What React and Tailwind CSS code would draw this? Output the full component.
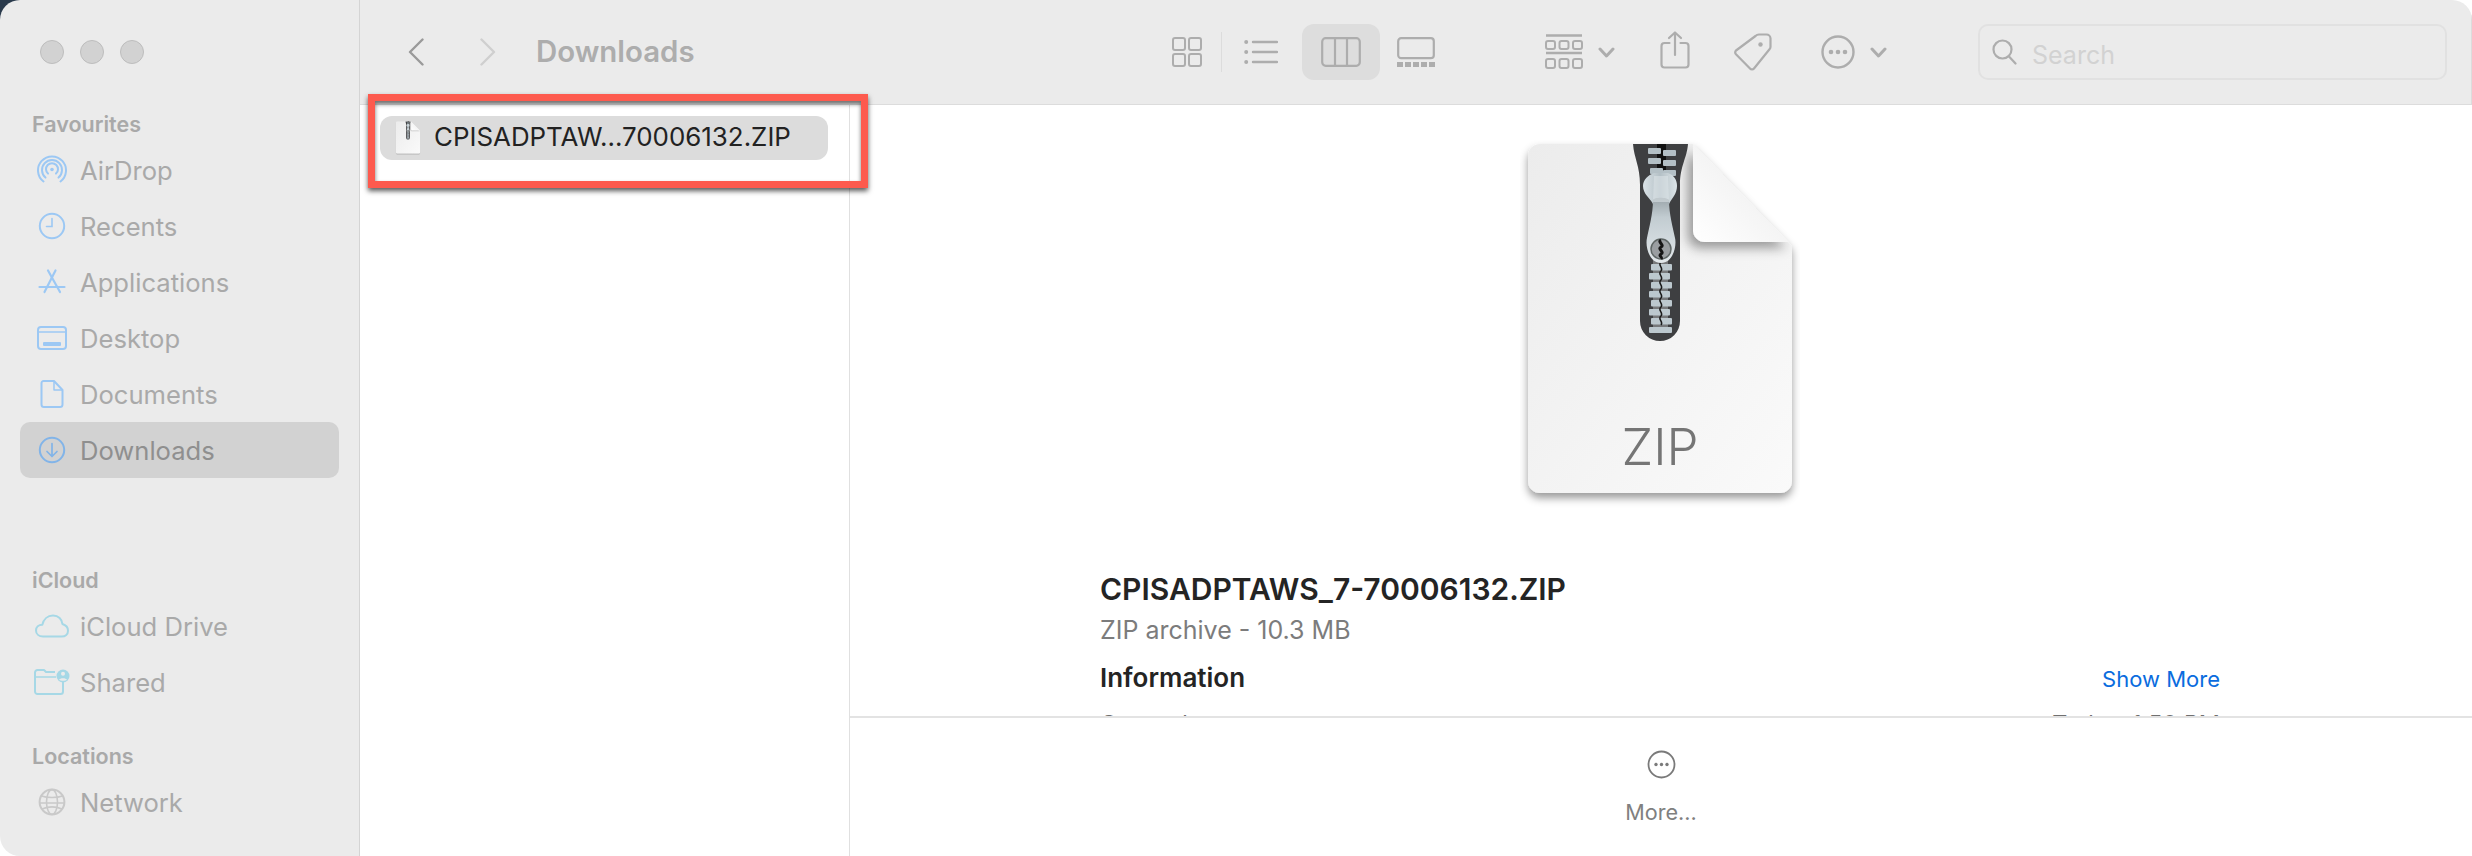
import React from "react";

const S = ({ w, h, vb, className = "", children, ...p }) => (
  <svg width={w} height={h} viewBox={vb || `0 0 ${w} ${h}`} fill="none" className={`shrink-0 ${className}`} {...p}>
    {children}
  </svg>
);

const blue = "#9cc8f4";
const teal = "#a6d8e6";

const AirDrop = () => (
  <S w={30} h={30} stroke={blue} strokeWidth="2" strokeLinecap="round">
    <path d="M6.5 26.5A14 14 0 1 1 23.5 26.5" />
    <path d="M8.5 22.6A10 10 0 1 1 21.5 22.6" />
    <path d="M11 18.6A6 6 0 1 1 19 18.6" />
    <circle cx="15" cy="14.5" r="1.8" fill={blue} stroke="none" />
  </S>
);
const Recents = () => (
  <S w={28} h={28} stroke={blue} strokeWidth="2" strokeLinecap="round">
    <circle cx="14" cy="14" r="12.2" />
    <path d="M14 6.5V14.5H8.5" strokeWidth="1.6" />
  </S>
);
const Apps = () => (
  <S w={28} h={28} stroke={blue} strokeWidth="2.2" strokeLinecap="round">
    <path d="M10 2.5L22 24" />
    <path d="M17.5 2.5L6.5 24" />
    <path d="M1.5 19H26.5" />
  </S>
);
const Desktop = () => (
  <S w={30} h={24} stroke={blue} strokeWidth="2">
    <rect x="1" y="1" width="28" height="22" rx="3" />
    <path d="M1 6H29" strokeWidth="1.5" />
    <rect x="6" y="16" width="18" height="4" rx="1" fill={blue} stroke="none" />
  </S>
);
const Documents = () => (
  <S w={24} h={28} stroke={blue} strokeWidth="2" strokeLinejoin="round">
    <path d="M3.5 1H14L22.5 10V24.5A2.5 2.5 0 0 1 20 27H4A2.5 2.5 0 0 1 1.5 24.5V3A2 2 0 0 1 3.5 1Z" />
    <path d="M14 1V10H22.5" strokeWidth="1.5" />
  </S>
);
const DownloadsI = () => (
  <S w={28} h={28} stroke="#82b4e8" strokeWidth="2" strokeLinecap="round" strokeLinejoin="round">
    <circle cx="14" cy="14" r="12.2" />
    <path d="M14 7.5V20M9 15.5L14 20.5L19 15.5" strokeWidth="1.7" />
  </S>
);
const Cloud = () => (
  <S w={34} h={24} stroke={teal} strokeWidth="2" strokeLinejoin="round">
    <path d="M8 22.5C4 22.5 1 20 1 16.5C1 13 3.7 10.7 7.3 10.7C8.5 5.5 12.5 1.5 18 1.5C23.5 1.5 27 5.3 27.4 10C30.7 11 33 13.5 33 16.7C33 20.2 30.4 22.5 26.7 22.5Z" />
  </S>
);
const Shared = () => (
  <S w={36} h={26} stroke={teal} strokeWidth="2" strokeLinejoin="round">
    <path d="M21 3H12L10 1H3.5A2.5 2.5 0 0 0 1 3.5V22.5A2.5 2.5 0 0 0 3.5 25H26.5A2.5 2.5 0 0 0 29 22.5V13" />
    <path d="M1 8H22" strokeWidth="1.5" />
    <circle cx="29" cy="7" r="6.5" fill={teal} stroke="none" />
    <circle cx="29" cy="4.8" r="2" fill="#ebebeb" stroke="none" />
    <path d="M25 10.8C25.8 8.6 32.2 8.6 33 10.8C31 12.2 27 12.2 25 10.8Z" fill="#ebebeb" stroke="none" />
  </S>
);
const Globe = () => (
  <S w={28} h={28} stroke="#c9c9c9" strokeWidth="1.6">
    <circle cx="14" cy="14" r="12.4" strokeWidth="2" />
    <ellipse cx="14" cy="14" rx="5.5" ry="12.4" />
    <path d="M3.5 8C9 10 19 10 24.5 8M2 15H26M4 21C10 18.5 18 18.5 24 21" />
  </S>
);

const Item = ({ icon, label, active }) => (
  <div className={`mx-5 h-14 flex items-center rounded-[10px] pl-4 ${active ? "bg-[#d2d2d2] text-[#8f8f8f]" : "text-[#a9a9a9]"}`}>
    <span className="w-8 flex items-center justify-center shrink-0">{icon}</span>
    <span className="ml-3 mt-px text-[25.6px] leading-8">{label}</span>
  </div>
);
const Label = ({ children, className = "" }) => (
  <div className={`h-7 pl-8 text-[21.5px] leading-7 font-semibold text-[#a9a9a9] ${className}`}>{children}</div>
);

const Sidebar = () => (
  <aside className="w-[360px] shrink-0 h-full bg-[#ebebeb] border-r border-[#d4d4d4] flex flex-col">
    <div className="flex gap-4 pl-10 pt-10">
      {[0, 1, 2].map((i) => (
        <div key={i} className="w-6 h-6 rounded-full bg-[#d2d2d2] border border-[#bdbdbd]" />
      ))}
    </div>
    <Label className="mt-[46px] mb-1">Favourites</Label>
    <Item icon={<AirDrop />} label="AirDrop" />
    <Item icon={<Recents />} label="Recents" />
    <Item icon={<Apps />} label="Applications" />
    <Item icon={<Desktop />} label="Desktop" />
    <Item icon={<Documents />} label="Documents" />
    <Item icon={<DownloadsI />} label="Downloads" active />
    <Label className="mt-[88px] mb-1">iCloud</Label>
    <Item icon={<Cloud />} label="iCloud Drive" />
    <Item icon={<Shared />} label="Shared" />
    <Label className="mt-8 mb-1">Locations</Label>
    <Item icon={<Globe />} label="Network" />
  </aside>
);

const tb = "#adadad";
const Chev = ({ className }) => (
  <S w={17} h={11} className={className} stroke={tb} strokeWidth="3" strokeLinecap="round" strokeLinejoin="round">
    <path d="M2 2L8.5 9L15 2" />
  </S>
);

const Toolbar = () => (
  <div className="h-[105px] shrink-0 bg-[#ebebeb] border-b border-r border-[#dcdcdc] flex items-center">
    <S w={16} h={28} className="ml-12" stroke="#9a9a9a" strokeWidth="2.4" strokeLinecap="round" strokeLinejoin="round">
      <path d="M14.5 1.5L2 14L14.5 26.5" />
    </S>
    <S w={16} h={28} className="ml-14" stroke="#cfcfcf" strokeWidth="2.4" strokeLinecap="round" strokeLinejoin="round">
      <path d="M1.5 1.5L14 14L1.5 26.5" />
    </S>
    <div className="ml-10 w-[636px] text-[29.4px] leading-9 font-semibold text-[#adadad]">Downloads</div>
    <S w={30} h={30} stroke={tb} strokeWidth="2">
      <rect x="1" y="1" width="12" height="12" rx="2" />
      <rect x="17" y="1" width="12" height="12" rx="2" />
      <rect x="1" y="17" width="12" height="12" rx="2" />
      <rect x="17" y="17" width="12" height="12" rx="2" />
    </S>
    <div className="ml-[19px] w-px h-10 bg-[#dcdcdc]" />
    <S w={34} h={26} className="ml-[22px]" stroke={tb} strokeWidth="2.4" strokeLinecap="round">
      <circle cx="2.2" cy="3" r="2" fill={tb} stroke="none" />
      <circle cx="2.2" cy="13" r="2" fill={tb} stroke="none" />
      <circle cx="2.2" cy="23" r="2" fill={tb} stroke="none" />
      <path d="M9 3H33M9 13H33M9 23H33" />
    </S>
    <div className="ml-6 w-[78px] h-14 rounded-[12px] bg-[#dddddd] flex items-center justify-center">
      <S w={40} h={30} stroke={tb} strokeWidth="2.2">
        <rect x="1.2" y="1.2" width="37.6" height="27.6" rx="3.5" />
        <path d="M14 1.2V28.8M26 1.2V28.8" />
      </S>
    </div>
    <S w={38} h={30} className="ml-[17px]" stroke={tb} strokeWidth="2.2">
      <rect x="1.2" y="1.2" width="35.6" height="20" rx="3" />
      <g fill={tb} stroke="none">
        <rect x="0" y="25" width="6" height="5" />
        <rect x="8" y="25" width="6" height="5" />
        <rect x="16" y="25" width="6" height="5" />
        <rect x="24" y="25" width="6" height="5" />
        <rect x="32" y="25" width="6" height="5" />
      </g>
    </S>
    <S w={38} h={36} className="ml-[110px]" stroke={tb} strokeWidth="2">
      <path d="M1 1.5H37M1 19H37" strokeWidth="2.6" />
      <rect x="1" y="7" width="9" height="8" rx="2" />
      <rect x="14.5" y="7" width="9" height="8" rx="2" />
      <rect x="28" y="7" width="9" height="8" rx="2" />
      <rect x="1" y="25" width="9" height="9" rx="2" />
      <rect x="14.5" y="25" width="9" height="9" rx="2" />
      <rect x="28" y="25" width="9" height="9" rx="2" />
    </S>
    <Chev className="ml-[15px]" />
    <S w={30} h={38} className="ml-[45px] -mt-1" stroke={tb} strokeWidth="2.2" strokeLinecap="round" strokeLinejoin="round">
      <path d="M15 24V1.5M9 7L15 1.5L21 7" />
      <path d="M9.5 12H4.5A3 3 0 0 0 1.5 15V33.5A3 3 0 0 0 4.5 36.5H25.5A3 3 0 0 0 28.5 33.5V15A3 3 0 0 0 25.5 12H20.5" />
    </S>
    <S w={38} h={38} className="ml-[44px]" stroke={tb} strokeWidth="2.2" strokeLinejoin="round">
      <path d="M25 1.5H32.5A4 4 0 0 1 36.5 5.5V13.5A4 4 0 0 1 35.5 16.3L20 35.5A2.6 2.6 0 0 1 16 35.5L2.2 21.5A3 3 0 0 1 2 17.5L21.5 3A5 5 0 0 1 25 1.5Z" />
      <circle cx="26.5" cy="11.5" r="2.2" fill={tb} stroke="none" />
    </S>
    <S w={34} h={34} className="ml-[49px]" stroke={tb} strokeWidth="2.4">
      <circle cx="17" cy="17" r="15.5" />
      <g fill={tb} stroke="none">
        <circle cx="10" cy="17" r="2.3" />
        <circle cx="17" cy="17" r="2.3" />
        <circle cx="24" cy="17" r="2.3" />
      </g>
    </S>
    <Chev className="ml-[15px]" />
    <div className="ml-[91px] w-[469px] h-14 rounded-[10px] border-2 border-[#e1e1e1] flex items-center pl-[12px]">
      <S w={25} h={26} stroke={tb} strokeWidth="2.2" strokeLinecap="round">
        <circle cx="10.5" cy="10.5" r="9" />
        <path d="M17 17.5L23.5 24.5" />
      </S>
      <span className="ml-[15px] mt-[5px] text-[25px] leading-8 text-[#d2d2d2]">Search</span>
    </div>
  </div>
);

const ZipPage = ({ w, h, prefix }) => (
  <S w={w} h={h} vb="0 0 280 370">
    <defs>
      <linearGradient id={`${prefix}page`} x1="0" y1="0" x2="1" y2="1">
        <stop offset="0" stopColor="#ececec" />
        <stop offset="1" stopColor="#fafafa" />
      </linearGradient>
      <linearGradient id={`${prefix}fold`} x1="0" y1="1" x2="1" y2="0">
        <stop offset="0" stopColor="#ffffff" />
        <stop offset="0.6" stopColor="#f2f2f2" />
        <stop offset="1" stopColor="#e2e2e2" />
      </linearGradient>
      <linearGradient id={`${prefix}metal`} x1="0" y1="0" x2="1" y2="0">
        <stop offset="0" stopColor="#dbe3e7" />
        <stop offset="0.5" stopColor="#b4c0c6" />
        <stop offset="1" stopColor="#dde5e8" />
      </linearGradient>
      <linearGradient id={`${prefix}pull`} x1="0" y1="0" x2="0" y2="1">
        <stop offset="0" stopColor="#9aa4a9" />
        <stop offset="0.3" stopColor="#c2ccd1" />
        <stop offset="1" stopColor="#e2e8eb" />
      </linearGradient>
      <filter id={`${prefix}shadow`} x="-10%" y="-10%" width="120%" height="120%">
        <feDropShadow dx="0" dy="5" stdDeviation="4" floodColor="#000" floodOpacity="0.4" />
      </filter>
      <filter id={`${prefix}foldShadow`} x="-40%" y="-40%" width="180%" height="180%">
        <feDropShadow dx="-5" dy="6" stdDeviation="6" floodColor="#000" floodOpacity="0.38" />
      </filter>
      <clipPath id={`${prefix}clip`}>
        <path d="M20 4H173L272 106V341A12 12 0 0 1 260 353H20A12 12 0 0 1 8 341V16A12 12 0 0 1 20 4Z" />
      </clipPath>
    </defs>
    <path
      d="M20 4H173L272 106V341A12 12 0 0 1 260 353H20A12 12 0 0 1 8 341V16A12 12 0 0 1 20 4Z"
      fill={`url(#${prefix}page)`}
      filter={`url(#${prefix}shadow)`}
    />
    <g clipPath={`url(#${prefix}clip)`}>
      <path
        d="M173 4V90A12 12 0 0 0 185 102H272L173 4Z"
        fill={`url(#${prefix}fold)`}
        filter={`url(#${prefix}foldShadow)`}
      />
      <path d="M113 4H168C167 18 160 26 160 45V181A20 20 0 0 1 120 181V45C120 26 114 18 113 4Z" fill="#3e3f41" />
    </g>
    <rect x="137" y="4" width="9" height="30" fill="#111" />
    <g fill="#b4c0c6">
      {[6, 16, 26].map((y) => (
        <rect key={`l${y}`} x={y === 26 ? 130 : 128} y={y + 2} width="13" height="6" rx="1" />
      ))}
      {[10, 20, 30].map((y) => (
        <rect key={`r${y}`} x="143" y={y} width="13" height="6" rx="1" />
      ))}
    </g>
    <rect x="133" y="120" width="15" height="68" fill="#77797b" />
    <g fill="#bcc8ce">
      {[124, 133, 142, 151, 160, 169, 178].map((y) => (
        <rect key={y} x={y % 2 ? 129 : 131} y={y} width="21" height="6.5" rx="1" />
      ))}
    </g>
    <path
      d="M141 122C137 125 144 128 141 131C137 134 144 137 141 140C137 143 144 146 141 149C137 152 144 155 141 158C137 161 144 164 141 167C137 170 144 173 141 176C137 179 144 182 141 185"
      stroke="#1a1a1a"
      strokeWidth="1.5"
    />
    <rect x="129" y="187" width="23" height="6" rx="1" fill="#bcc8ce" />
    <path d="M134 33H148C154 35 157 40 157 46C157 54 152 58 149 64H133C130 58 123 54 123 46C123 40 128 35 134 33Z" fill={`url(#${prefix}metal)`} />
    <path
      d="M133 60C134 57 147 57 149 60C149 74 153 88 155 98C157 106 153 123 141 123C129 123 125 106 127 98C129 88 133 74 133 60Z"
      fill={`url(#${prefix}pull)`}
    />
    <path d="M134 36H148L149 62H133Z" fill="#dfe6e9" opacity="0.55" />
    <circle cx="141" cy="109" r="10" fill="#9a9ea1" stroke="#5f6665" strokeWidth="1.5" />
    <path d="M141 100C137 102 145 105 141 107C137 109 145 112 141 114C138 116 143 117 141 119" stroke="#151515" strokeWidth="3" fill="none" />
  </S>
);

const Preview = () => (
  <div className="flex-1 min-w-0 h-full flex flex-col bg-white">
    <div className="h-[611px] shrink-0 overflow-hidden">
      <div className="relative mt-[35px] ml-[670px] w-[280px] h-[370px]">
        <ZipPage w={280} h={370} prefix="big" />
        <span className="absolute inset-x-0 top-[280px] text-center text-[51px] leading-[54px] font-light text-[#757575]">ZIP</span>
      </div>
      <div className="pl-[250px] pr-[252px]">
        <div className="mt-[61px] h-9 text-[30px] leading-9 font-semibold text-[#242424]">CPISADPTAWS_7-70006132.ZIP</div>
        <div className="mt-[5px] h-9 text-[25px] leading-9 text-[#7c7c7c]">ZIP archive - 10.3 MB</div>
        <div className="mt-3 h-9 flex items-center justify-between">
          <span className="text-[26px] leading-9 font-semibold text-[#242424]">Information</span>
          <span className="pt-[2px] text-[22px] leading-9 text-[#0a6cde]">Show More</span>
        </div>
        <div className="mt-[13px] flex justify-between text-[23.4px] leading-[30px] text-[#707070]">
          <span>Created</span>
          <span>Today, 1:50 PM</span>
        </div>
      </div>
    </div>
    <div className="h-[2px] shrink-0 bg-[#e3e3e3]" />
    <div className="flex-1 flex flex-col items-center pt-[32px]">
      <S w={29} h={29} stroke="#7a7a7a" strokeWidth="1.8">
        <circle cx="14.5" cy="14.5" r="13" />
        <g fill="#7a7a7a" stroke="none">
          <circle cx="9" cy="14.5" r="1.7" />
          <circle cx="14.5" cy="14.5" r="1.7" />
          <circle cx="20" cy="14.5" r="1.7" />
        </g>
      </S>
      <span className="mt-[19px] text-[21.6px] leading-7 text-[#808080]">More...</span>
    </div>
  </div>
);

export default function App() {
  return (
    <div className="relative w-[2472px] h-[856px] bg-white overflow-hidden" style={{ fontFamily: "Inter, 'Noto Sans', sans-serif" }}>
      <div className="absolute top-0 left-0 w-5 h-5 bg-[#2a3a4c]" />
      <div className="relative w-full h-full rounded-t-[20px] rounded-bl-[20px] overflow-hidden flex">
        <Sidebar />
        <div className="flex-1 min-w-0 h-full flex flex-col">
          <Toolbar />
          <div className="flex-1 min-h-0 flex">
            <div className="w-[490px] shrink-0 h-full border-r border-[#e0e0e0] bg-white pt-[11px] pl-5 pr-5">
              <div className="h-11 w-[448px] rounded-[12px] bg-[#dcdcdc] flex items-center pl-[15px]">
                <ZipPage w={26} h={34} prefix="small" />
                <span className="ml-[13px] -mt-[2px] text-[25.9px] leading-8 text-[#222222] whitespace-nowrap">CPISADPTAW...70006132.ZIP</span>
              </div>
            </div>
            <Preview />
          </div>
        </div>
      </div>
      <div className="absolute left-[368px] top-[94px] w-[500px] h-[94px] border-[7px] border-[#fd5a4e] shadow-[0_3px_5px_rgba(0,0,0,0.65),inset_0_3px_4px_rgba(0,0,0,0.55)]" />
    </div>
  );
}
